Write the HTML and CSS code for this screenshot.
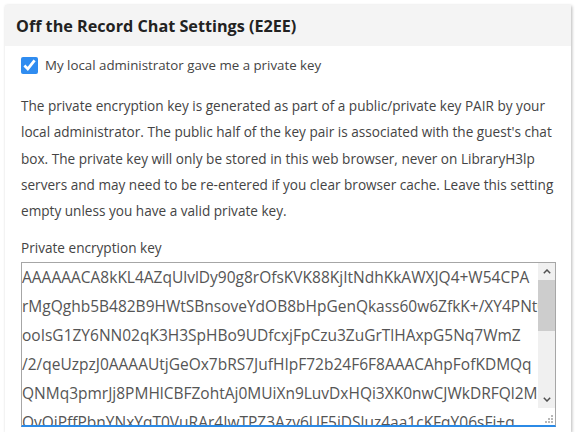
FILE: index.html
```html
<!DOCTYPE html>
<html lang="en">
<head>
<meta charset="utf-8">
<title>Off the Record Chat Settings</title>
<link rel="stylesheet" href="styles.css">
</head>
<body>
<section class="card">
  <header class="card-head">
    <h2 class="card-title">Off the Record Chat Settings (E2EE)</h2>
  </header>
  <div class="card-body">
    <label class="check-row">
      <input type="checkbox" class="check" checked>
      <span class="check-label">My local administrator gave me a private key</span>
    </label>
    <p class="help">The private encryption key is generated as part of a public/private key PAIR by your local administrator. The public half of the key pair is associated with the guest's chat box. The private key will only be stored in this web browser, never on LibraryH3lp servers and may need to be re-entered if you clear browser cache. Leave this setting empty unless you have a valid private key.</p>
    <div class="field-label">Private encryption key</div>
    <div class="key-box">
      <textarea class="key-input" spellcheck="false">AAAAAACA8kKL4AZqUlvlDy90g8rOfsKVK88KjItNdhKkAWXJQ4+W54CPA
rMgQghb5B482B9HWtSBnsoveYdOB8bHpGenQkass60w6ZfkK+/XY4PNt0
ooIsG1ZY6NN02qK3H3SpHBo9UDfcxjFpCzu3ZuGrTlHAxpG5Nq7WmZ
/2/qeUzpzJ0AAAAUtjGeOx7bRS7JufHIpF72b24F6F8AAACAhpFofKDMQq
QNMq3pmrJj8PMHlCBFZohtAj0MUiXn9LuvDxHQi3XK0nwCJWkDRFQl2M
OvQiPffPbnYNxYqT0VuRAr4IwTPZ3Azv6UF5iDSluz4aa1cKFqY06sFi+q
bT7uQe2LxN0pRk5sW8vYc3HgD1mZ4aJ9fKoE6iUtPzB+lXyQwVnGs2hCr
mD8kPq3XwLz7NvB5tJ1aRy0sEe9UcKo4GhIf2ZpTxW6bVnM==</textarea>
      <div class="scrollbar" aria-hidden="true">
        <div class="sb-btn"><svg width="8" height="5" viewBox="0 0 8 5"><path d="M0.8 4.2 L4 1 L7.2 4.2" fill="none" stroke="#505050" stroke-width="1.5"/></svg></div>
        <div class="sb-thumb"></div>
        <div class="sb-track"></div>
        <div class="sb-btn"><svg width="8" height="5" viewBox="0 0 8 5"><path d="M0.8 0.8 L4 4 L7.2 0.8" fill="none" stroke="#505050" stroke-width="1.5"/></svg></div>
        <div class="sb-corner"><svg width="10" height="10" viewBox="0 0 10 10"><g fill="#b8b8b8"><rect x="7" y="1" width="2" height="2"/><rect x="4" y="4" width="2" height="2"/><rect x="7" y="4" width="2" height="2"/><rect x="1" y="7" width="2" height="2"/><rect x="4" y="7" width="2" height="2"/><rect x="7" y="7" width="2" height="2"/></g></svg></div>
      </div>
    </div>
  </div>
</section>
</body>
</html>
```
FILE: styles.css
```css
* { box-sizing: border-box; }
html, body { margin: 0; padding: 0; background: #fff; }
body {
  font-family: "Open Sans", "Noto Sans", sans-serif;
  color: #444;
  padding: 5px 7px 0 5px;
}
.card {
  height: 427px;
  background: #fff;
  box-shadow: 1px 1px 3px rgba(0,0,0,0.28);
  display: flex;
  flex-direction: column;
  overflow: hidden;
}
.card-head {
  height: 41px;
  flex-shrink: 0;
  background: #f4f4f4;
  padding: 0 11px;
  display: flex;
  align-items: center;
}
.card-title {
  margin: 0;
  font-size: 16.2px;
  font-weight: 700;
  color: #222;
}
.card-body {
  padding: 10px 16px 0 16px;
  display: flex;
  flex-direction: column;
}
.check-row {
  display: flex;
  align-items: center;
  gap: 7px;
  height: 18px;
  flex-shrink: 0;
}
.check {
  width: 17px;
  height: 17px;
  margin: 0;
  accent-color: #2f8cf0;
}
.check-label {
  font-size: 13.3px;
  color: #444;
}
.help {
  margin: 19px 0 0 0;
  font-size: 13.6px;
  line-height: 26.3px;
  color: #444;
}
.field-label {
  margin-top: 15px;
  font-size: 13.6px;
  line-height: 18px;
  color: #444;
}
.key-box {
  margin-top: 5px;
  width: 535px;
  height: 165px;
  flex-shrink: 0;
  border: 1px solid #a6a6a6;
  border-bottom: 2px solid #2b8ae6;
  display: flex;
}
.key-input {
  flex: 1;
  border: 0;
  outline: none;
  resize: none;
  margin: 0;
  padding: 0;
  font-family: "Open Sans", "Noto Sans", sans-serif;
  font-size: 15.5px;
  line-height: 29px;
  color: #555;
  white-space: pre;
  overflow: hidden;
  background: #fff;
}
.scrollbar {
  width: 17px;
  display: flex;
  flex-direction: column;
  background: #f0f0f0;
}
.sb-btn {
  height: 17px;
  display: flex;
  align-items: center;
  justify-content: center;
}
.sb-thumb {
  height: 51px;
  background: #cdcdcd;
}
.sb-track { flex: 1; }
.sb-corner {
  height: 17px;
  background: #fff;
  display: flex;
  align-items: flex-end;
  justify-content: flex-end;
  padding: 0 1px 1px 0;
}
```
